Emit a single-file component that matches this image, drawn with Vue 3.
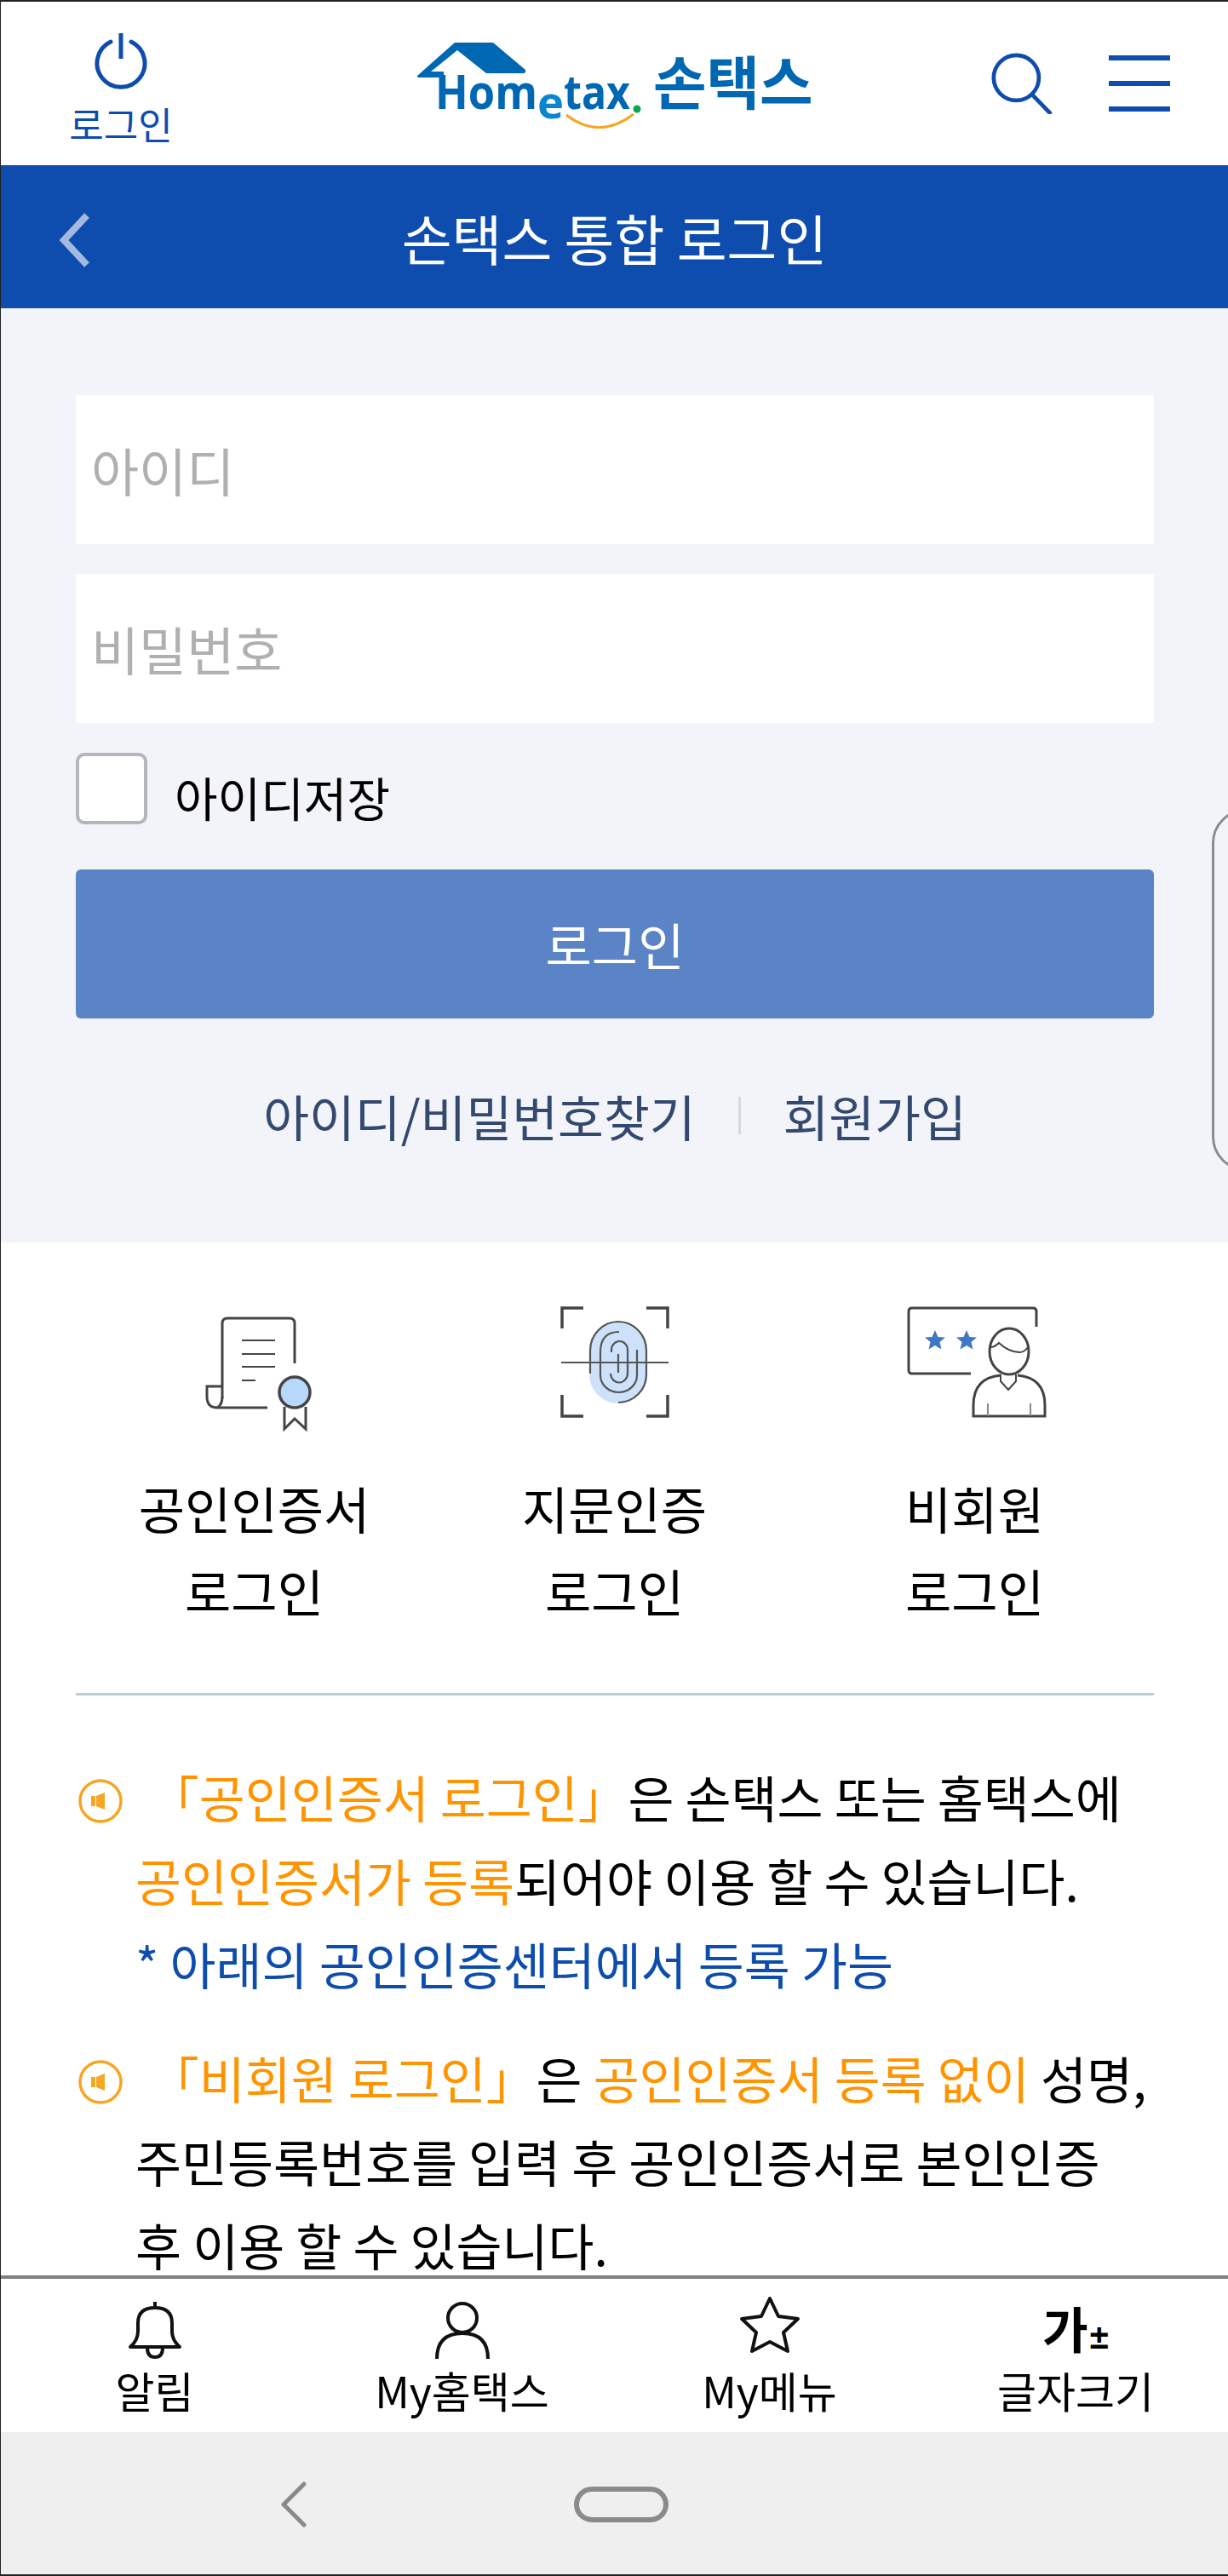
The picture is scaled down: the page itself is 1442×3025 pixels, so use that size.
<template>
  <div class="screen">
    <header class="top">
      <div class="login-btn">
        <svg class="power" viewBox="0 0 64 70" width="64" height="70">
          <path d="M20 12 A28 28 0 1 0 44 12" fill="none" stroke="#0e4dae" stroke-width="5" stroke-linecap="round" />
          <path d="M32 2 V32" fill="none" stroke="#0e4dae" stroke-width="5" />
        </svg>
        <span>로그인</span>
      </div>
      <div class="logo">
        <svg viewBox="10 15 270 105" width="270" height="105">
          <path d="M11 58 L55 19 H100 L138 51 Q139 55 135 55 H92 L58 28 L27 53 H42 V60 H14 Q10 60 11 58 Z" fill="#0067b3" />
          <text x="32" y="97" class="logo-word" textLength="120" lengthAdjust="spacingAndGlyphs">Hom</text>
          <text x="152" y="108" class="logo-e" textLength="31" lengthAdjust="spacingAndGlyphs">e</text>
          <text x="183" y="97" class="logo-word" textLength="78" lengthAdjust="spacingAndGlyphs">tax</text>
          <circle cx="269" cy="97" r="4.5" fill="#0aa84f" />
          <path d="M186 104 Q225 134 265 103" fill="none" stroke="#f5a623" stroke-width="3" />
        </svg>
        <span class="logo-name">손택스</span>
      </div>
      <div class="top-icons">
        <svg viewBox="0 0 76 76" width="72" height="72">
          <circle cx="31" cy="31" r="28" fill="none" stroke="#0e4dae" stroke-width="5" />
          <path d="M50 51 L74 76" stroke="#0e4dae" stroke-width="5" />
        </svg>
        <div class="menu">
          <i></i><i></i><i></i>
        </div>
      </div>
    </header>
    <div class="title-bar">
      <svg class="back" viewBox="0 0 40 64" width="40" height="64">
        <path d="M35 3 L8 32 L35 61" fill="none" stroke="#a3b9e0" stroke-width="8" />
      </svg>
      <h1>손택스 통합 로그인</h1>
    </div>
    <main class="body">
      <section class="panel">
        <div class="field">아이디</div>
        <div class="field">비밀번호</div>
        <label class="save"><span class="check"></span><span class="save-text">아이디저장</span></label>
        <div class="submit">로그인</div>
        <div class="links">
          <span>아이디/비밀번호찾기</span>
          <i class="sep"></i>
          <span>회원가입</span>
        </div>
      </section>
      <section class="options">
        <div class="option" v-for="o in options" :key="o.id">
          <svg v-if="o.id === 'cert'" viewBox="0 -10 160 170" width="160" height="170">
            <g fill="none" stroke="#444" stroke-width="3">
              <path d="M42 112 V24 Q42 18 48 18 H121 Q127 18 127 24 V71" />
              <path d="M42 98 H24 V110 Q24 123 36 123 H95" />
              <path d="M36 123 Q42 120 42 110" />
              <path d="M65 44 H104 M65 60 H104 M65 75 H104 M65 91 H81" stroke-width="2" />
              <path d="M115 122 V148 L127 136 L140 148 V122" />
            </g>
            <circle cx="127" cy="105" r="18" fill="#b8d8fb" stroke="#444" stroke-width="3.5" />
          </svg>
          <svg v-else-if="o.id === 'finger'" viewBox="-3 0 150 170" width="150" height="170">
            <path d="M42 66 A34 34 0 0 1 110 66 V94 A34 34 0 0 1 42 94 Z" fill="#cde1fb" />
            <g fill="none" stroke="#444" stroke-width="3.5">
              <path d="M10 40 V16 H35 M109 16 H134 V40 M10 118 V143 H35 M109 143 H134 V118" />
            </g>
            <g fill="none" stroke="#555" stroke-width="2.2">
              <path d="M43 93 V66 A33 34 0 0 1 109 66 V94 A33 33 0 0 1 76 127" />
              <path d="M77 44 Q55 44 55 68 V95 A21.5 20 0 0 0 98 95 V65" />
              <path d="M68 68 V65 A9.5 10 0 0 1 87 65 V92 A10 11 0 0 1 67 93" />
              <path d="M76 70 V92 M9 80 H135" />
            </g>
          </svg>
          <svg v-else viewBox="0 0 190 170" width="190" height="170">
            <g fill="none" stroke="#444" stroke-width="3">
              <path d="M167 38 V20 Q167 16 163 16 H21 Q17 16 17 20 V89 Q17 93 21 93 H90" />
              <ellipse cx="135" cy="67" rx="23" ry="27" />
              <path d="M113 62 Q118 62 123 57 Q135 68 147 68 Q153 68 157 62" stroke-width="2" />
              <path d="M125 95 Q93 98 93 130 V143 H177 V130 Q177 98 145 95" />
              <path d="M125 94 V102 L134 112 L143 102 V94" stroke-width="2" />
              <path d="M110 128 V143 M160 128 V143" stroke="#888" stroke-width="2" />
            </g>
            <path d="M48 42 L51.500 50 L60 50.500 L53.500 56 L55.500 64.500 L48 60 L40.500 64.500 L42.500 56 L36 50.500 L44.500 50 Z" fill="#3e78c4" />
            <path d="M85 42 L88.500 50 L97 50.500 L90.500 56 L92.500 64.500 L85 60 L77.500 64.500 L79.500 56 L73 50.500 L81.500 50 Z" fill="#3e78c4" />
          </svg>
          <p>{{ o.label }}<br />로그인</p>
        </div>
      </section>
      <hr class="rule" />
      <section class="notes">
        <div class="note">
          <svg class="speaker" viewBox="0 0 54 54" width="54" height="54">
            <circle cx="27" cy="27" r="24" fill="none" stroke="#f5a623" stroke-width="3.500" />
            <path d="M16 21 H21 V33 H16 Z M22 21 L32 17 V37 L22 33 Z" fill="#f5a623" />
          </svg>
          <p>
            <em class="quote">「공인인증서 로그인」</em>은 손택스 또는 홈택스에<br />
            <em>공인인증서가 등록</em>되어야 이용 할 수 있습니다.<br />
            <b>* 아래의 공인인증센터에서 등록 가능</b>
          </p>
        </div>
        <div class="note">
          <svg class="speaker" viewBox="0 0 54 54" width="54" height="54">
            <circle cx="27" cy="27" r="24" fill="none" stroke="#f5a623" stroke-width="3.500" />
            <path d="M16 21 H21 V33 H16 Z M22 21 L32 17 V37 L22 33 Z" fill="#f5a623" />
          </svg>
          <p>
            <em class="quote">「비회원 로그인」</em>은 <em>공인인증서 등록 없이</em> 성명,<br />
            주민등록번호를 입력 후 공인인증서로 본인인증<br />
            후 이용 할 수 있습니다.
          </p>
        </div>
      </section>
    </main>
    <div class="edge"></div>
    <footer class="tabs">
      <div class="tab">
        <svg viewBox="0 -6 64 74" width="64" height="74">
          <g fill="none" stroke="#111" stroke-width="4">
            <path d="M32 1 V8 M3 54 Q12 46 12 36 V26 Q12 8 32 8 Q52 8 52 26 V36 Q52 46 61 54 Z" stroke-linejoin="round" />
            <path d="M23 55 Q23 66 32 66 Q41 66 41 55" />
          </g>
        </svg>
        <span>알림</span>
      </div>
      <div class="tab">
        <svg viewBox="0 -6 64 74" width="64" height="74">
          <g fill="none" stroke="#111" stroke-width="4">
            <circle cx="32" cy="20" r="17" />
            <path d="M2 68 Q2 38 32 38 Q62 38 62 68" />
          </g>
        </svg>
        <span>My홈택스</span>
      </div>
      <div class="tab">
        <svg viewBox="0 0 72 74" width="72" height="74">
          <path d="M36 3 L46 24 L69 27 L52 43 L57 65 L36 54 L15 65 L20 43 L3 27 L26 24 Z" fill="none" stroke="#111" stroke-width="4" stroke-linejoin="round" />
        </svg>
        <span>My메뉴</span>
      </div>
      <div class="tab">
        <div class="size-mark">가<small>±</small></div>
        <span>글자크기</span>
      </div>
    </footer>
    <nav class="sys-nav">
      <svg viewBox="0 0 40 54" width="40" height="54">
        <path d="M32 3 L8 27 L32 51" fill="none" stroke="#8a8a8a" stroke-width="5" stroke-linecap="round" stroke-linejoin="round" />
      </svg>
      <span class="home-pill"></span>
    </nav>
  </div>
</template>

<script setup>
const options = [
  { id: 'cert', label: '공인인증서' },
  { id: 'finger', label: '지문인증' },
  { id: 'guest', label: '비회원' },
]
</script>

<style>
html, body {
  margin: 0;
  background: #fff;
}
</style>

<style scoped>
.screen {
  position: relative;
  width: 1442px;
  height: 3025px;
  box-sizing: border-box;
  border: 1px solid #222;
  border-top-width: 2px;
  border-bottom-width: 2px;
  border-right: 0;
  display: flex;
  flex-direction: column;
  overflow: hidden;
  font-family: "Noto Sans CJK KR", "Noto Sans", sans-serif;
  color: #000;
  background: #fff;
}

.top {
  height: 192px;
  flex: none;
  display: grid;
  grid-template-columns: 488px 1fr auto;
  align-items: center;
  padding-right: 68px;
}

.login-btn {
  align-self: start;
  display: flex;
  flex-direction: column;
  align-items: center;
  width: 282px;
  padding-top: 35px;
  color: #0e4dae;
  font-size: 44px;
  line-height: 60px;
}

.power {
  margin-bottom: 8px;
}

.logo {
  display: flex;
  align-items: center;
  gap: 8px;
}

.logo-word {
  font-family: "Open Sans", sans-serif;
  font-weight: 700;
  font-size: 56px;
  fill: #0067b3;
}

.logo-e {
  font-family: "Open Sans", sans-serif;
  font-weight: 700;
  font-size: 52px;
  fill: #0a86cf;
}

.logo-name {
  font-size: 68px;
  font-weight: 700;
  color: #0067b3;
  line-height: 1;
  margin-top: -8px;
}

.top-icons {
  display: flex;
  align-items: center;
  gap: 66px;
}

.menu {
  width: 72px;
  display: flex;
  flex-direction: column;
  gap: 24px;
}

.menu i {
  display: block;
  height: 6px;
  background: #0e4dae;
}

.title-bar {
  position: relative;
  height: 168px;
  flex: none;
  background: #0e4dae;
  display: flex;
  align-items: center;
  justify-content: center;
}

.back {
  position: absolute;
  left: 66px;
  top: 56px;
}

.title-bar h1 {
  margin: 0;
  color: #fff;
  font-size: 64px;
  font-weight: 400;
  line-height: 1;
}

.body {
  flex: 1;
  min-height: 0;
  overflow: hidden;
}

.panel {
  background: #f2f4f9;
  height: 1097px;
  box-sizing: border-box;
  padding: 102px 87px 0 88px;
}

.field {
  height: 175px;
  background: #fff;
  margin-bottom: 35px;
  padding-left: 18px;
  font-size: 61px;
  line-height: 175px;
  color: #b0b0b0;
}

.save {
  display: flex;
  align-items: center;
  gap: 32px;
  height: 84px;
  font-size: 55px;
}

.save-text {
  margin-top: 18px;
}

.check {
  width: 84px;
  height: 84px;
  box-sizing: border-box;
  background: #fff;
  border: 4px solid #b4b6bf;
  border-radius: 10px;
}

.submit {
  height: 175px;
  margin-top: 53px;
  background: #5a84c6;
  border-radius: 6px;
  color: #fff;
  font-size: 59px;
  line-height: 175px;
  text-align: center;
}

.links {
  display: flex;
  justify-content: center;
  align-items: center;
  gap: 50px;
  margin-top: 72px;
  font-size: 58.500px;
  line-height: 84px;
  color: #33496f;
}

.sep {
  width: 3px;
  height: 44px;
  background: #d5d8df;
}

.options {
  display: flex;
  justify-content: center;
  padding-top: 61px;
}

.option {
  width: 423px;
  text-align: center;
}

.option svg {
  display: block;
  margin: 0 auto;
}

.option p {
  margin: 32px 0 0;
  font-size: 59px;
  line-height: 97px;
}

.rule {
  margin: 72px 87px 0 88px;
  border: 0;
  height: 3px;
  background: #bccbd8;
}

.notes {
  padding: 70px 60px 0 88px;
}

.note {
  position: relative;
  padding-left: 70px;
  margin-bottom: 36px;
}

.speaker {
  position: absolute;
  left: 2px;
  top: 27px;
}

.note p {
  margin: 0;
  font-size: 58.700px;
  line-height: 98px;
  white-space: nowrap;
}

.note em {
  font-style: normal;
  color: #ff9400;
}

.note .quote {
  margin-left: 16px;
}

.note b {
  font-weight: 400;
  color: #0e4dae;
}

.edge {
  position: absolute;
  left: 1422px;
  top: 948px;
  width: 80px;
  height: 425px;
  box-sizing: border-box;
  border: 3px solid #8c8c90;
  border-radius: 50px;
}

.tabs {
  height: 184px;
  flex: none;
  box-sizing: border-box;
  border-top: 4px solid #808080;
  background: #fff;
  display: grid;
  grid-template-columns: 361px 361px 361px 1fr;
  padding-top: 20px;
}

.tab {
  display: flex;
  flex-direction: column;
  align-items: center;
  font-size: 50px;
  line-height: 72px;
}

.size-mark {
  height: 74px;
  font-size: 58px;
  font-weight: 700;
  line-height: 74px;
}

.size-mark small {
  font-family: "Liberation Sans", sans-serif;
  font-size: 40px;
  font-weight: 700;
  margin-left: 2px;
}

.sys-nav {
  flex: none;
  height: 167px;
  box-sizing: border-box;
  padding: 2px 0 0 324px;
  background: #efefef;
  display: flex;
  align-items: center;
  gap: 309px;
}

.home-pill {
  width: 111px;
  height: 42px;
  box-sizing: border-box;
  border: 6px solid #8a8a8a;
  border-radius: 21px;
}
</style>
